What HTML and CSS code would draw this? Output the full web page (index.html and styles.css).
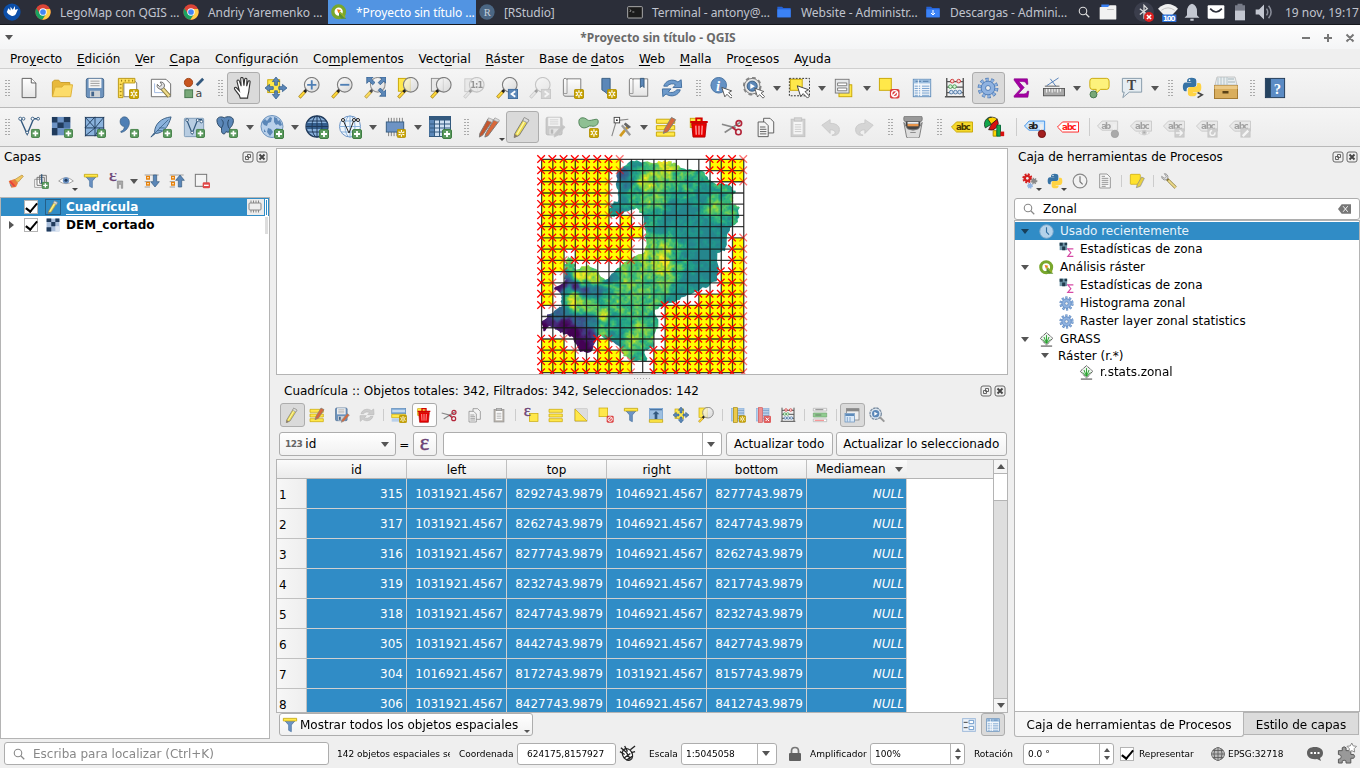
FILE: index.html
```html
<!DOCTYPE html>
<html lang="es">
<head>
<meta charset="utf-8">
<title>*Proyecto sin título - QGIS</title>
<link rel="stylesheet" href="styles.css">
</head>
<body>
<svg class="defs" aria-hidden="true">
<defs>
<linearGradient id="gGlass" x1="0" y1="0" x2="1" y2="1"><stop offset="0" stop-color="#fff"/><stop offset="1" stop-color="#cfcfcf"/></linearGradient>
<linearGradient id="gPaper" x1="0" y1="0" x2="0" y2="1"><stop offset="0" stop-color="#fff"/><stop offset="1" stop-color="#e4e4e4"/></linearGradient>
</defs>
</svg>
<svg class="symbols" aria-hidden="true">
<symbol id="plus" viewBox="0 0 10 10"><rect x=".5" y=".5" width="9" height="9" rx="1.5" fill="#5b9a5e" stroke="#3f7d43"/><path d="M5 2v6M2 5h6" stroke="#fff" stroke-width="1.8"/></symbol>
<symbol id="star" viewBox="0 0 11 11"><rect x=".5" y=".5" width="10" height="10" rx="1.5" fill="#c9a400" stroke="#b08e00"/><path d="M5.500 1.500v8M2 3.500l7 4M9 3.500l-7 4" stroke="#fff" stroke-width="1.300"/><circle cx="5.500" cy="5.500" r="1.200" fill="#c9a400"/></symbol>
<symbol id="lens" viewBox="0 0 24 24"><path d="M1.500 22.500l6.500-7" stroke="#b08e20" stroke-width="3.600"/><path d="M2 22l5-5.500" stroke="#ffd93b" stroke-width="2.200"/><path d="M7 16.500l2.500-3" stroke="#222" stroke-width="3"/><circle cx="15" cy="8.500" r="8" fill="url(#gGlass)" fill-opacity=".75" stroke="#7d7d7d" stroke-width="1.200"/></symbol>
<symbol id="cursor" viewBox="0 0 14 14"><path d="M1 1l3.500 11 2.500-3 4.500 4.500 2-2L9 7l3.500-2z" fill="#fff" stroke="#444"/></symbol>
<symbol id="new" viewBox="0 0 24 24"><path d="M4.500 1.500h10l5 5v16h-15z" fill="url(#gPaper)" stroke="#555"/><path d="M14.500 1.500v5h5" fill="#fff" stroke="#555"/></symbol>
<symbol id="open" viewBox="0 0 24 24"><path d="M1.500 21V5.500l2-2h5l2 2.500h10V9" fill="#e8b93a" stroke="#c79a26"/><path d="M1.500 21.500L4.500 11H12l2-2.500h9.500l-2 13z" fill="#fcdc6a" stroke="#dcae33"/></symbol>
<symbol id="save" viewBox="0 0 24 24"><rect x="2.500" y="1.500" width="19" height="21" rx="2" fill="#6d93bd" stroke="#43658b"/><rect x="5" y="2" width="14" height="10" fill="#f4f4f4"/><path d="M7 4.500h10M7 7h10M7 9.500h10" stroke="#999"/><rect x="6.500" y="15" width="11" height="7" fill="#cfd3d6"/><rect x="8" y="16" width="3" height="5" fill="#43658b"/></symbol>
<symbol id="layout" viewBox="0 0 24 24"><path d="M7.500 2.500h10l4 4v15h-14z" fill="#fff" stroke="#777"/><path d="M1.500 1.500h18v5h-13v16h-5z" fill="#ffdf5a" stroke="#b8950f"/><path d="M5 3v2M9 3v2M13 3v2M17 3v2M3 8h2M3 12h2M3 16h2M3 20h2" stroke="#8a6d00"/><use href="#star" x="13" y="13" width="11" height="11"/></symbol>
<symbol id="layman" viewBox="0 0 24 24"><path d="M1.500 2.500h16l5 5v14h-21z" fill="#fff" stroke="#666"/><path d="M5 7v10h10" fill="none" stroke="#9cb6e0"/><path d="M12 11l9 10" stroke="#8a7a3a" stroke-width="4.500"/><path d="M13 12l8 9" stroke="#efdc8c" stroke-width="2.600"/><path d="M8 8a4 4 0 0 0 5.500 5l2-2A4 4 0 0 0 11 5.500l2 3-2.500 2z" fill="#e4e4e4" stroke="#666"/></symbol>
<symbol id="style" viewBox="0 0 24 24"><circle cx="6" cy="6" r="4.500" fill="#c8551f" stroke="#9c3e10"/><path d="M15 9l7-7" stroke="#33597e" stroke-width="3"/><rect x="2" y="14" width="8.500" height="8.500" fill="#78a878" stroke="#43744a"/><text x="13.500" y="22" font-size="12" font-family="DejaVu Sans" fill="#444">a</text></symbol>
<symbol id="hand" viewBox="0 0 24 24"><path d="M9 23l-1-3-5-6.500c-1-2 .800-3 2.200-1.500L8 15 5.500 5c-.300-2 2-2.400 2.600-.5L10 10 9.500 2c0-2 2.500-2 2.700 0l.8 7.500.8-7c.300-1.800 2.500-1.500 2.500.3L16 10l1.500-5c.6-1.500 2.600-1 2.200.8L18.500 14c0 4-1.500 5-1.500 9z" fill="#fff" stroke="#333" stroke-width="1.200"/></symbol>
<symbol id="pan" viewBox="0 0 24 24"><rect x="3" y="3" width="13" height="14" fill="#ffe84a" stroke="#c7a500"/><g fill="#5b87b8" stroke="#2f5b8a" stroke-width=".8"><path d="M12 0l4 5h-2.500v4h-3V5H8zM12 24l-4-5h2.500v-4h3v4H16zM0 12l5-4v2.500h4v3H5V16zM24 12l-5 4v-2.500h-4v-3h4V8z"/></g></symbol>
<symbol id="zin" viewBox="0 0 24 24"><use href="#lens" width="24" height="24"/><path d="M15 3.500v10M10 8.500h10" stroke="#4f7fb5" stroke-width="2"/></symbol>
<symbol id="zout" viewBox="0 0 24 24"><use href="#lens" width="24" height="24"/><path d="M10 8.500h10" stroke="#4f7fb5" stroke-width="2"/></symbol>
<symbol id="zfull" viewBox="0 0 24 24"><use href="#lens" width="24" height="24" opacity=".8"/><path d="M3 0h7L8 2.200l4 3.800-2.500 2.500-4-4L3 7zM24 0v7l-2.200-2.500-4 4L15.500 6l4-3.800L17 0zM24 21h-7l2.500-2.500-4-4 2.300-2.500 4 4L24 14z" fill="#5b87b8" stroke="#2f5b8a" stroke-width=".8"/></symbol>
<symbol id="zsel" viewBox="0 0 24 24"><rect x="1.500" y="1.500" width="13" height="14" fill="#ffe84a" stroke="#c7a500"/><use href="#lens" width="24" height="24"/></symbol>
<symbol id="zlay" viewBox="0 0 24 24"><rect x="1.500" y="1.500" width="13" height="14" fill="#e8e8e8" stroke="#8a8a8a"/><use href="#lens" width="24" height="24"/></symbol>
<symbol id="znat" viewBox="0 0 24 24"><rect x="2" y="2" width="14" height="14" fill="#ddd" stroke="#888"/><use href="#lens" width="24" height="24"/><text x="8" y="12" font-size="9" font-weight="bold" font-family="DejaVu Sans" textLength="14">1:1</text></symbol>
<symbol id="zlast" viewBox="0 0 24 24"><use href="#lens" width="24" height="24"/><rect x="13.500" y="13.500" width="10" height="10" fill="#5b87b8" stroke="#3c6a9c"/><path d="M21 15.500l-4 3 4 3" fill="none" stroke="#fff" stroke-width="2"/></symbol>
<symbol id="znext" viewBox="0 0 24 24"><use href="#lens" width="24" height="24"/><rect x="13.500" y="13.500" width="10" height="10" fill="#aaa" stroke="#888"/><path d="M17 15.500l4 3-4 3" fill="none" stroke="#fff" stroke-width="2"/></symbol>
<symbol id="nmap" viewBox="0 0 24 24"><path d="M1.500 3c0-2 4-2 4 0v-1h15v19h-16c-2 0-3-.5-3-2z" fill="url(#gPaper)" stroke="#777"/><path d="M5.500 3v15h-4" fill="none" stroke="#999"/><use href="#star" x="13" y="13" width="11" height="11"/></symbol>
<symbol id="nbook" viewBox="0 0 24 24"><path d="M7.500 1.500h9V22L12 17l-4.500-3z" fill="#5b87b8" stroke="#33597e"/><use href="#star" x="13" y="13" width="11" height="11"/></symbol>
<symbol id="book" viewBox="0 0 24 24"><path d="M1.500 3c0-2 4-2 4 0v-1h16v19h-17c-2 0-3-.5-3-2z" fill="url(#gPaper)" stroke="#777"/><path d="M5.500 3v15h-4" fill="none" stroke="#999"/><path d="M13.500 1.500h4v10l-2-2-2 2z" fill="#5b87b8" stroke="#33597e"/></symbol>
<symbol id="refresh" viewBox="0 0 24 24"><path d="M3 10a9.500 8.500 0 0 1 15.500-4.500L22 3l.5 8.500H13l3-3A6 5 0 0 0 7 10z" fill="#6d9acb" stroke="#3c6a9c"/><path d="M21 14a9.500 8.500 0 0 1-15.500 4.500L2 21.500 1.500 13H11l-3 3a6 5 0 0 0 9-2z" fill="#6d9acb" stroke="#3c6a9c"/></symbol>
<symbol id="info" viewBox="0 0 24 24"><circle cx="9.500" cy="9" r="8.500" fill="#6491c4" stroke="#44709f"/><text x="6.500" y="15" font-size="16" font-weight="bold" font-style="italic" font-family="Liberation Serif" fill="#fff">i</text><use href="#cursor" x="12" y="10" width="13" height="14"/></symbol>
<symbol id="action" viewBox="0 0 24 24"><circle cx="10" cy="10" r="9" fill="none" stroke="#888" stroke-width="2.500" stroke-dasharray="4 3"/><circle cx="10" cy="10" r="8.500" fill="#e6e6e6" stroke="#777"/><circle cx="10" cy="10" r="5.500" fill="#5b87b8" stroke="#33597e"/><path d="M8 7l5 3-5 3z" fill="#fff"/><use href="#cursor" x="12" y="11" width="12" height="13"/></symbol>
<symbol id="select" viewBox="0 0 24 24"><rect x="1.500" y="1.500" width="22" height="19" fill="#eee" stroke="#222" stroke-dasharray="2 1.500"/><rect x="2.500" y="2.500" width="13" height="12" fill="#ffe84a" stroke="#c7a500"/><use href="#cursor" x="9" y="8" width="15" height="16"/></symbol>
<symbol id="selval" viewBox="0 0 24 24"><rect x="6.500" y="8.500" width="14" height="13" fill="#ffe84a" stroke="#c7a500"/><rect x="2.500" y="2.500" width="15" height="15" fill="#e6e8ea" stroke="#777"/><path d="M5 6.500h10v3H5zM5 12h10v3H5z" fill="#fff" stroke="#777"/></symbol>
<symbol id="desel" viewBox="0 0 24 24"><rect x="1.500" y="1.500" width="13" height="13" fill="#ffe84a" stroke="#c7a500"/><rect x="13" y="13" width="10.500" height="10.500" rx="2" fill="#db4040"/><circle cx="18.200" cy="18.200" r="3.300" fill="none" stroke="#fff" stroke-width="1.500"/><path d="M16 20.500l4.500-4.500" stroke="#fff" stroke-width="1.500"/></symbol>
<symbol id="table" viewBox="0 0 24 24"><rect x="2.500" y="2.500" width="19" height="19" fill="#f0f5fa" stroke="#5d8ab9"/><rect x="3" y="3" width="18" height="4" fill="#9dbfe0"/><path d="M5 4.700h6M13 4.700h6" stroke="#4c77a6"/><path d="M4 10h6M12 10h8M4 12.500h6M12 12.500h8M4 15h6M12 15h8M4 17.500h6M12 17.500h8M4 20h6M12 20h8" stroke="#6d9acb"/><path d="M8 3v18" stroke="#fff"/></symbol>
<symbol id="abacus" viewBox="0 0 24 24"><path d="M3 1v20M21 1v20M1 21.500h22M3 5h18M3 11h18M3 17h18" stroke="#555" stroke-width="1.500" fill="none"/><g stroke-width="1"><g fill="#f9d5d5" stroke="#cc3434"><circle cx="9" cy="4.500" r="2"/><circle cx="16" cy="4.500" r="2"/></g><g fill="#d8f1d8" stroke="#4a9c51"><circle cx="7" cy="10.500" r="2"/><circle cx="11.500" cy="10.500" r="2"/></g><g fill="#d8e4f5" stroke="#4c77a6"><circle cx="8" cy="16.500" r="2"/><circle cx="12.500" cy="16.500" r="2"/><circle cx="17" cy="16.500" r="2"/></g></g></symbol>
<symbol id="gear" viewBox="0 0 24 24"><circle cx="12" cy="12" r="9.200" fill="none" stroke="#4c7ab5" stroke-width="4.200" stroke-dasharray="3.300 2.480"/><circle cx="12" cy="12" r="9" fill="none" stroke="#8fb2e0" stroke-width="3" stroke-dasharray="2.500 3.160" stroke-dashoffset="-.4"/><circle cx="12" cy="12" r="7.500" fill="#8fb2e0" stroke="#4c7ab5"/><circle cx="12" cy="12" r="2.700" fill="#eee" stroke="#4c7ab5"/></symbol>
<symbol id="sigma" viewBox="0 0 24 24"><path d="M4.500 2H19l.5 6h-1.500c-.5-2-1.500-3-4-3H9.500l6 6.500L9 18.500h6c2.500 0 3.500-1 4-3H20.500L19.500 22H4.500v-1.500l7-7.500-7-9.500z" fill="#a500a5" stroke="#800080" stroke-width=".7"/></symbol>
<symbol id="measure" viewBox="0 0 24 24"><path d="M4 9.500L17 1M8 2l6 8" stroke="#4c7ab5" stroke-width="1" fill="none"/><path d="M2 10h16" stroke="#555" stroke-width="1"/><rect x=".5" y="12.500" width="23" height="8" fill="#a8a8a8" stroke="#555"/><path d="M4 13v4M7 13v3M10 13v4M13 13v3M16 13v4M19 13v3" stroke="#fff"/></symbol>
<symbol id="tip" viewBox="0 0 24 24"><path d="M4.500 1.500h16q2.500 0 2.500 3v6q0 3-2.500 3h-7l-6 6 1.500-6H4.500Q2 13.500 2 10.500v-6q0-3 2.500-3z" fill="#fdf27c" stroke="#c7a500"/><circle cx="6" cy="19" r="3.800" fill="#78a878" stroke="#43744a"/></symbol>
<symbol id="text" viewBox="0 0 24 24"><path d="M1.500 1.500h21v15H9l-7 6 1.500-6h-2z" fill="#e6edf2" stroke="#8095a5"/><text x="6.500" y="14" font-size="15" font-weight="bold" font-family="Liberation Serif" fill="#444">T</text></symbol>
<symbol id="py" viewBox="0 0 24 24"><path d="M6 11V5c0-3 2-4 5.500-4S17 2 17 4.500V9c0 2-1 3-3 3H9c-2 0-3.500 1-3.500 3.500V17H4c-2 0-3-2-3-5s1-5.500 3.500-5.500H11V6H6z" fill="#3773a5"/><path d="M18 7h2c2.500 0 3 2.500 3 5.500s-1 5.500-3.500 5.500H13v.7h4.500c0 3-1.500 4.300-5 4.300S7 22 7 19.500V15c0-2 1-3 3-3h5c2 0 3-1.500 3-3z" fill="#ffd343"/><circle cx="9" cy="3.800" r="1" fill="#fff"/></symbol>
<symbol id="pycon" viewBox="0 0 24 24"><use href="#py" width="22" height="22"/><path d="M17 17l5 2.500-5 3" fill="none" stroke="#444" stroke-width="1.800"/></symbol>
<symbol id="box" viewBox="0 0 24 24"><path d="M1 9L3 1h18l2 8z" fill="#e9eef0" stroke="#aaa" stroke-width=".6"/><path d="M4 2v7M7 1v8M10 1v8M13 1v8" stroke="#b4c3c8"/><path d="M14 3h6M14 6h7" stroke="#a4b3b8"/><rect x=".5" y="9.500" width="23" height="13" fill="#d9ae5e" stroke="#a47b34"/><rect x=".5" y="9.500" width="23" height="3.500" fill="#ecc986"/><rect x="8.500" y="15" width="6" height="2.500" fill="#5b4216"/></symbol>
<symbol id="help" viewBox="0 0 24 24"><rect x="1.500" y="1.500" width="21" height="21" fill="#5b8bc4" stroke="#1f3752"/><rect x="2" y="2" width="5.500" height="20" fill="#24425f"/><text x="10.500" y="18" font-size="16" font-weight="bold" font-family="Liberation Serif" fill="#fff">?</text></symbol>
<symbol id="vadd" viewBox="0 0 24 24"><path d="M2.500 3L10 20 17 3h5" fill="none" stroke="#33597e" stroke-width="1.500"/><g fill="#fff" stroke="#33597e"><circle cx="2.500" cy="3" r="1.700"/><circle cx="6" cy="3" r="1.500"/><circle cx="16" cy="3" r="1.700"/><circle cx="22" cy="3" r="1.500"/><circle cx="10" cy="18" r="1.500"/></g><use href="#plus" x="14" y="14" width="10" height="10"/></symbol>
<symbol id="radd" viewBox="0 0 24 24"><rect x="1" y="1" width="20" height="20" fill="#6d93c4"/><path d="M1 1h6v6H1zM14 1h7v6h-7zM7 7h7v6H7zM1 13h6v8H1z" fill="#203b5c"/><path d="M14 7h7v6h-7z" fill="#4a72a6"/><use href="#plus" x="14" y="14" width="10" height="10"/></symbol>
<symbol id="mesh" viewBox="0 0 24 24"><rect x="1.500" y="1.500" width="20" height="20" fill="#8ab2dc" stroke="#203b5c"/><path d="M12 1v21M1 13h21M1 1l11 12L1 22M12 13L22 1M12 1L1 13M12 22l5-9" stroke="#203b5c" fill="none"/><use href="#plus" x="14" y="14" width="10" height="10"/></symbol>
<symbol id="comma" viewBox="0 0 24 24"><path d="M7 1c6-1 9 7 4 13-2 2.500-4 3.500-6.500 4l-.5-1c3-1.500 4-3 4-5.500C2 11 2 2 7 1z" fill="#4f7fb5" stroke="#33597e" stroke-width=".7"/><use href="#plus" x="14" y="14" width="10" height="10"/></symbol>
<symbol id="feather" viewBox="0 0 24 24"><path d="M23 1C12 2 5 9 5 18l-4 5 5-4C14 19 20 12 23 1z" fill="#8ab2dc" stroke="#33597e"/><path d="M3 21L20 4M10 13l6 0M8 16l5 0" stroke="#33597e" stroke-width=".8"/><use href="#plus" x="14" y="14" width="10" height="10"/></symbol>
<symbol id="vbox" viewBox="0 0 24 24"><rect x="1.500" y="2.500" width="21" height="20" rx="1" fill="#b8cde2" stroke="#7b98b5"/><path d="M4 4l6 15 6-15h5" fill="none" stroke="#33597e" stroke-width="1.300"/><g fill="#fff" stroke="#33597e"><circle cx="4.500" cy="4.500" r="1.500"/><circle cx="16" cy="4.500" r="1.500"/><circle cx="20" cy="6" r="1.500"/><circle cx="10" cy="18" r="1.500"/></g><use href="#plus" x="14" y="14" width="10" height="10"/></symbol>
<symbol id="eleph" viewBox="0 0 24 24"><path d="M1 5c0-4 5-5 8-3 3-2 10-2 10 3 0 4-3 8-4 8v3c0 2-3 2-4 1-1 4-5 3-5-1v-3C3 12 1 8 1 5z" fill="#5b87b8" stroke="#24425f"/><path d="M6 4c3 2 2 6 0 9M14 4c-2 3-1 7 0 9" fill="none" stroke="#24425f"/><use href="#plus" x="14" y="14" width="10" height="10"/></symbol>
<symbol id="wms" viewBox="0 0 24 24"><circle cx="12" cy="11.500" r="11" fill="#b9d0ea" stroke="#6d93bd"/><path d="M2 7l3-3 2 2 3-4 2 1-1 4-3 1-1 3-3-1zM14 2l3 1 1 3 2-1 2 5-2 1-2-2-2 1-2-3zM8 13l3 1 2 3-3 4-3-4zM16 13l5 1-2 3-2-1zM4 14l2 3-2 0z" fill="#5b87b8"/><use href="#plus" x="14" y="14" width="10" height="10"/></symbol>
<symbol id="wcs" viewBox="0 0 24 24"><ellipse cx="12" cy="11.500" rx="11" ry="10.500" fill="#8ab2dc" stroke="#203b5c" stroke-width="1.300"/><path d="M1.500 8h21v6h-21z" fill="#345f8e"/><ellipse cx="12" cy="11.500" rx="5" ry="10.500" fill="none" stroke="#203b5c"/><path d="M12 1v21M1 11.500h22M3 6h18M3 17h18" stroke="#203b5c"/><use href="#plus" x="14" y="14" width="10" height="10"/></symbol>
<symbol id="wfs" viewBox="0 0 24 24"><circle cx="12" cy="11.500" r="10.500" fill="#f1f6fb" stroke="#6d93c4"/><ellipse cx="12" cy="11.500" rx="5" ry="10.500" fill="none" stroke="#8ab2dc"/><path d="M12 1v21M1 11.500h22M3 6h18M3 17h18" stroke="#8ab2dc"/><path d="M5 5l6 13 5-13h4" fill="none" stroke="#222"/><g fill="#fff" stroke="#222"><circle cx="5" cy="5" r="1.500"/><circle cx="16" cy="5" r="1.500"/><circle cx="20" cy="5" r="1.500"/></g><use href="#plus" x="14" y="14" width="10" height="10"/></symbol>
<symbol id="chip" viewBox="0 0 24 24"><path d="M5 2v20M8 2v20M11 2v20M14 2v20M17 2v20M20 2v20" stroke="#777"/><rect x="2.500" y="6.500" width="19" height="11" fill="#6d93c4" stroke="#33597e"/><use href="#star" x="14" y="14" width="10" height="10"/></symbol>
<symbol id="vtab" viewBox="0 0 24 24"><rect x="1.500" y="1.500" width="21" height="20" fill="#cfe0f2" stroke="#33597e"/><rect x="1.500" y="1.500" width="21" height="4" fill="#33597e"/><rect x="1.500" y="5" width="5" height="16" fill="#5b87b8"/><path d="M6.500 2v20M11.500 2v20M16.500 2v20M2 9h20M2 13h20M2 17h20" stroke="#33597e"/><use href="#plus" x="14" y="14" width="10" height="10"/></symbol>
<symbol id="pencil" viewBox="0 0 24 24"><path d="M7 22l-3.500 1.500L4 19.500 14.500 2l5 2.500L9 21z" fill="#e9d84e" stroke="#777"/><path d="M6.500 20L16.500 3" stroke="#fff8a8" stroke-width="1.500"/><path d="M14.500 1.500l5 3-1.500 3-5-2.500z" fill="#ddd" stroke="#999"/><path d="M3.500 23.500L4 19.500l3.500 2.500z" fill="#8a7a6a"/></symbol>
<symbol id="pen2" viewBox="0 0 24 24"><path d="M5 21l-3.500 2L2 19 11 3l5 2z" fill="#c4562e" stroke="#777"/><path d="M11 21.500L7.500 23l1-4L18 3l5 2.500z" fill="#d8683a" stroke="#777"/><path d="M11.500 2l5 2-1 3-5-2zM18.500 2l5 2.500-1.500 2-5-2z" fill="#ddd" stroke="#999" stroke-width=".7"/></symbol>
<symbol id="edsave" viewBox="0 0 24 24"><use href="#save" width="22" height="22"/><path d="M11 23l1-4 8-9 3 2-8 9z" fill="#d8683a" stroke="#888"/></symbol>
<symbol id="poly" viewBox="0 0 24 24"><path d="M2 6c0-5 6-5 9-2s11-3 12 1-3 7-7 6-4 2-8 2-6-3-6-7z" fill="#8fc093" stroke="#4d7f54"/><use href="#star" x="13" y="13" width="11" height="11"/></symbol>
<symbol id="vertex" viewBox="0 0 24 24"><path d="M2 22L7 5l13-1.500" fill="none" stroke="#888" stroke-width="1.200"/><rect x="4.500" y="1.500" width="6" height="6" fill="#fff" stroke="#444"/><circle cx="7.500" cy="4.500" r="1" fill="#222"/><path d="M11 22L20 11" stroke="#d09a20" stroke-width="3"/><path d="M13 10l9 11" stroke="#999" stroke-width="2.500"/><path d="M17 7l6 5-3 2-5-5z" fill="#666"/></symbol>
<symbol id="bars" viewBox="0 0 24 24"><path d="M1.500 3.500h20v4.500h-20zM1.500 10.500h20V15h-20zM1.500 17.500h20V22h-20z" fill="#ffe84a" stroke="#c7a500"/></symbol>
<symbol id="edmulti" viewBox="0 0 24 24"><use href="#bars" width="24" height="24"/><path d="M9 19l1.500-5L18 1.500l4.500 2.500L14 17z" fill="#d8683a" stroke="#7d7d7d"/></symbol>
<symbol id="trash" viewBox="0 0 24 24"><rect x="2.500" y="2.500" width="11" height="10" fill="#ffe84a" stroke="#c7a500"/><path d="M4 8h16l-1.500 15h-13z" fill="#e80000" stroke="#b00000"/><path d="M2.500 6.500h19M9 5.500v-3h6v3" stroke="#d40000" stroke-width="2" fill="none"/><path d="M8.500 10.500l.5 10M12 10.500v10M15.500 10.500l-.5 10" stroke="#ff9a9a" stroke-width="1.500"/></symbol>
<symbol id="cut" viewBox="0 0 24 24"><path d="M1 9l15 4M4 18L21 7" stroke="#888" stroke-width="1.800"/><circle cx="19.500" cy="8" r="3" fill="none" stroke="#b3263a" stroke-width="1.800"/><circle cx="19" cy="17.500" r="3" fill="none" stroke="#b3263a" stroke-width="1.800"/><path d="M12 12l5 4" stroke="#b3263a" stroke-width="2"/></symbol>
<symbol id="copy" viewBox="0 0 24 24"><path d="M10.500 2.500h7l4 4v12h-11z" fill="#f5f5f5" stroke="#555"/><path d="M4.500 6.500h7l4 4v12h-11z" fill="#f5f5f5" stroke="#555"/><path d="M6.500 12h6M6.500 14.500h7M6.500 17h7M6.500 19.500h7" stroke="#555"/></symbol>
<symbol id="paste" viewBox="0 0 24 24"><rect x="4.500" y="3.500" width="15" height="19" fill="#b59a78" stroke="#777"/><rect x="7" y="6" width="10" height="14" fill="#fff"/><path d="M8.500 9.500h7M8.500 12h7M8.500 14.500h7M8.500 17h7" stroke="#888"/><rect x="8" y="2" width="8" height="3.500" fill="#aaa" stroke="#777"/></symbol>
<symbol id="undo" viewBox="0 0 24 24"><path d="M2 10l9-6v4c7 0 11 3 10 8.500-1 4-4 5-8 4.500 5-1 5-6-2-6v4z" fill="#aaa" stroke="#888"/></symbol>
<symbol id="redo" viewBox="0 0 24 24"><path d="M22 10l-9-6v4C6 8 2 11 3 16.500c1 4 4 5 8 4.500-5-1-5-6 2-6v4z" fill="#aaa" stroke="#888"/></symbol>
<symbol id="osm" viewBox="0 0 24 24"><rect x="2" y="0" width="20" height="6" rx="2" fill="#999" stroke="#777"/><rect x="4" y="6" width="16" height="9" fill="#444"/><path d="M6 7.500h12" stroke="#eee" stroke-width="2"/><path d="M6 10h12" stroke="#e8954a" stroke-width="2.500"/><path d="M2 7l3 16q0 1 2 1h10q2 0 2-1l3-16-4 7q-6 3-12 0z" fill="#ddd" stroke="#777"/><path d="M9 18h6" stroke="#888"/></symbol>
<symbol id="tag" viewBox="0 0 24 24"><path d="M.5 12L6 6.500h17.500v11H6z"/><text x="5.500" y="15.500" font-size="9.500" font-weight="bold" font-family="DejaVu Sans" fill="currentColor" stroke="none" textLength="16">abc</text></symbol>
<symbol id="tagab" viewBox="0 0 24 24"><path d="M.5 11l5-5.500h17v10h-17z" fill="#cfe6fb" stroke="#3b8fe8"/><text x="4.500" y="14" font-size="9.500" font-weight="bold" font-family="DejaVu Sans" fill="#222" textLength="11">ab</text><path d="M19 9v8" stroke="#eee" stroke-width="3"/><circle cx="19.500" cy="19.500" r="4" fill="#a31f1f" stroke="#701010"/></symbol>
<symbol id="pie" viewBox="0 0 24 24"><path d="M8 9V1a8 8 0 0 0-6.500 12z" fill="#13a64b" stroke="#111" stroke-width=".7"/><path d="M8 9l6.500-5.500A8 8 0 0 0 4 3z" fill="#ffd400" stroke="#111" stroke-width=".7"/><path d="M8 9l6.500-5.500A8 8 0 0 1 5 15z" fill="#d81010" stroke="#111" stroke-width=".7"/><path d="M10 16h4v6h-4z" fill="#ffd400" stroke="#a80"/><path d="M14 10h4v12h-4z" fill="#13a64b" stroke="#063"/><path d="M18 17h4v5h-4z" fill="#d81010"/></symbol>
<symbol id="funnel" viewBox="0 0 24 24"><path d="M2 3h20l-8 9v10l-4-2v-8z" fill="#6d93c4" stroke="#3c6a9c"/><path d="M2 2h20v4H2z" fill="#ffe84a" stroke="#c7a500"/></symbol>
<symbol id="brush" viewBox="0 0 24 24"><path d="M1 12l9-3 5 6-3 6-7 1z" fill="#ec7a3c"/><path d="M3 12l7 8" stroke="#e84040" stroke-width="2.500"/><path d="M2 15l5 6-3-1z" fill="#5b87b8"/><path d="M10 10l11-7 2 2-8 9z" fill="#f0c860" stroke="#b58a30"/></symbol>
<symbol id="group" viewBox="0 0 24 24"><path d="M2.500 9.500h11v12h-11z" fill="#fff" stroke="#777"/><path d="M6 6.500h11v12H6zM10 3.500h10v12H10z" fill="none" stroke="#777" stroke-width="1.500"/><path d="M13 2v14" stroke="#33597e" stroke-width="2"/><use href="#plus" x="13" y="13" width="11" height="11"/></symbol>
<symbol id="eye" viewBox="0 0 24 24"><path d="M1 12Q12 2 23 12 12 20 1 12z" fill="#fff" stroke="#999" stroke-width="1.300"/><circle cx="12" cy="11" r="4.800" fill="#6d93c4"/><circle cx="12" cy="11" r="2.300" fill="#203b5c"/></symbol>
<symbol id="eps" viewBox="0 0 24 24"><text x="4" y="21" font-size="34" font-family="Liberation Serif" fill="#6b4275" stroke="#6b4275" stroke-width=".7">ε</text></symbol>
<symbol id="epsf" viewBox="0 0 24 24"><use href="#eps" x="-2" y="-5" width="20" height="20"/><path d="M14 12h8v11h-2v-6h-4v6h-2z" fill="#aaa" stroke="#888"/></symbol>
<symbol id="expand" viewBox="0 0 24 24"><path d="M1 3h21M1 13h8M1 21h8" stroke="#777"/><path d="M4 5h4v4H4zM4 14h4v4H4z" fill="#fff" stroke="#e8820a" stroke-width="2"/><path d="M14 3h5v10h4l-6.500 8L10 13h4z" fill="#5b87b8" stroke="#33597e"/></symbol>
<symbol id="collapse" viewBox="0 0 24 24"><path d="M1 3h21M1 13h8M1 21h8" stroke="#777"/><path d="M4 5h4v4H4zM4 14h4v4H4z" fill="#fff" stroke="#e8820a" stroke-width="2"/><path d="M14 21h5V11h4l-6.500-8L10 11h4z" fill="#5b87b8" stroke="#33597e"/></symbol>
<symbol id="remove" viewBox="0 0 24 24"><rect x="2" y="2" width="17" height="18" fill="#f4f4f4" stroke="#777" stroke-width="1.500"/><rect x="13" y="14" width="11" height="9" rx="2" fill="#e04848"/><path d="M15 18.500h7" stroke="#fff" stroke-width="2"/></symbol>
<symbol id="raster" viewBox="0 0 24 24"><rect x="1" y="1" width="22" height="22" fill="#a9bedb"/><path d="M1 1h8v6H1zM16 1h7v6h-7zM9 7h7v7H9zM1 16h8v7H1z" fill="#203b5c"/><path d="M16 14h7v9h-7z" fill="#dde6f2"/></symbol>
<symbol id="eform" viewBox="0 0 24 24"><rect x="9.500" y="9.500" width="13" height="12" fill="#ffe84a" stroke="#c7a500"/><use href="#eps" x="-2" y="-4" width="18" height="20"/></symbol>
<symbol id="invert" viewBox="0 0 24 24"><rect x="3" y="3" width="18" height="18" fill="#f1f1f1" stroke="#999"/><path d="M3 21h18L3 3z" fill="#f4f4f4"/><path d="M3 3h18v18z" fill="#ddd"/><path d="M3 3v18h18z" fill="#ffe84a" stroke="#c7a500"/></symbol>
<symbol id="totop" viewBox="0 0 24 24"><rect x="2" y="2" width="20" height="20" fill="#9dbfe0" stroke="#6d9acb"/><path d="M2 19h20v4H2z" fill="#ffe84a" stroke="#c7a500"/><path d="M12 6l5 5h-3v7h-4v-7H7z" fill="#33597e"/><path d="M3 4h18" stroke="#4c77a6" stroke-width="2"/></symbol>
<symbol id="tabnew" viewBox="0 0 24 24"><rect x="1" y="2" width="21" height="8" fill="#8ab2dc" stroke="#5d8ab9"/><path d="M1 11h21v5H1z" fill="#ffe84a" stroke="#c7a500"/><path d="M1 17h21v5H1z" fill="#b9d0ea"/><path d="M2 6h19" stroke="#fff" stroke-width="1.500"/><use href="#star" x="12" y="12" width="12" height="12"/></symbol>
<symbol id="colnew" viewBox="0 0 24 24"><rect x="2" y="2" width="19" height="19" fill="#b9d0ea" stroke="#8ab2dc"/><path d="M12 5h9M12 9h9M12 13h9M12 17h9" stroke="#5d8ab9"/><rect x="5" y="1" width="6" height="22" fill="#ecc94a" stroke="#a68800"/><use href="#star" x="13" y="12" width="11" height="12"/></symbol>
<symbol id="coldel" viewBox="0 0 24 24"><rect x="2" y="2" width="19" height="19" fill="#b9d0ea" stroke="#8ab2dc"/><path d="M12 5h9M12 9h9M12 13h9M12 17h9" stroke="#5d8ab9"/><rect x="5" y="1" width="6" height="22" fill="#ef9090" stroke="#d45454"/><rect x="13" y="13" width="11" height="11" rx="2" fill="#e06060"/><path d="M16 16l5 5M21 16l-5 5" stroke="#fff" stroke-width="1.500"/></symbol>
<symbol id="cond" viewBox="0 0 24 24"><path d="M2 2h20v4H2z" fill="#f5f5f5" stroke="#aaa"/><path d="M2 9h20v6H2z" fill="#90cc90" stroke="#6fa56f"/><path d="M2 18h20v4H2z" fill="#fff" stroke="#aaa"/><path d="M5 4h12M5 12h9" stroke="#555"/><path d="M4 20h14" stroke="#e44"/></symbol>
<symbol id="dock" viewBox="0 0 24 24"><rect x="3.500" y="2.500" width="19" height="17" fill="#eee" stroke="#777"/><path d="M3.500 2.500h19v4h-19z" fill="#888"/><rect x="1.500" y="9.500" width="14" height="13" fill="#d9e8f7" stroke="#5d8ab9"/><path d="M2 12h13" stroke="#5d8ab9" stroke-width="3"/><path d="M5 15v7M9 15v7" stroke="#5d8ab9"/></symbol>
<symbol id="magact" viewBox="0 0 24 24"><circle cx="10" cy="10" r="8.500" fill="#dfe9f3" stroke="#7d8fa3" stroke-width="2" stroke-dasharray="4 1"/><circle cx="10" cy="10" r="5.500" fill="#5b87b8"/><path d="M8 7l5 3-5 3z" fill="#fff"/><path d="M16 15l7 7" stroke="#999" stroke-width="3"/></symbol>
<symbol id="clock" viewBox="0 0 24 24"><circle cx="12" cy="12" r="10.300" fill="#f2f2f2" stroke="#888" stroke-width="1.800"/><path d="M12 5v8l4 4" fill="none" stroke="#777" stroke-width="1.800"/></symbol>
<symbol id="clockb" viewBox="0 0 24 24"><circle cx="12" cy="12" r="10.800" fill="#b4d2ea" stroke="#7fa9cc" stroke-width="1.500"/><path d="M12 5v8l4 4" fill="none" stroke="#2f6da0" stroke-width="1.800"/></symbol>
<symbol id="doc" viewBox="0 0 24 24"><path d="M4 1.500h11l5 5v16H4z" fill="#f7f7f7" stroke="#999" stroke-width="1.500"/><path d="M7 8h10M7 11h10M7 14h10M7 17h10M7 20h6M7 5h5" stroke="#888" stroke-width="1.300"/></symbol>
<symbol id="edit" viewBox="0 0 24 24"><rect x="2" y="2" width="15" height="15" rx="1" fill="#ffe22c" stroke="#c7a500"/><path d="M11 22l1.500-5L19 6l4 2-6 12z" fill="#e8d040" stroke="#888"/></symbol>
<symbol id="wrench" viewBox="0 0 24 24"><path d="M9 9l13 13" stroke="#8a7a3a" stroke-width="4.500"/><path d="M11 11l11 11" stroke="#efdc8c" stroke-width="2.800"/><path d="M1 5a5 5 0 0 0 7 5l2-2a5 5 0 0 0-5-7l3 4-3 3z" fill="#ddd" stroke="#777"/></symbol>
<symbol id="gears" viewBox="0 0 24 24"><circle cx="8" cy="8" r="5.500" fill="#d42020" stroke="#d42020" stroke-width="4" stroke-dasharray="2.500 1.820"/><circle cx="8" cy="8" r="2" fill="#eee"/><circle cx="18" cy="12" r="3.500" fill="#888" stroke="#888" stroke-width="3" stroke-dasharray="1.500 1.200"/><circle cx="12" cy="19" r="3" fill="#8fb2e0" stroke="#8fb2e0" stroke-width="3" stroke-dasharray="1.500 1"/></symbol>
<symbol id="zonal" viewBox="0 0 24 24"><path d="M1 1h12v12H1z" fill="#6e96a8"/><path d="M1 1h5v5H1zM9 1h4v4H9zM5 7h5v6H5z" fill="#203b4c"/><path d="M23 11h-9l5 6-5 6h9" fill="none" stroke="#d64aa5" stroke-width="1.800"/></symbol>
<symbol id="qgis" viewBox="0 0 24 24"><circle cx="11.500" cy="11.500" r="8.700" fill="#fff" stroke="#79a72d" stroke-width="5"/><path d="M12 12l11 10h-7l-4-4z" fill="#5b9030"/><path d="M9 8l6 1-4 5z" fill="#ee7913"/><path d="M13 12l8 8" stroke="#93b023" stroke-width="2.500"/></symbol>
<symbol id="grass" viewBox="0 0 24 24"><path d="M12 1l10 9-10 11L2 10z" fill="#eef3ee" stroke="#333" stroke-width="1.500" stroke-dasharray="2 1"/><path d="M12 18V5M12 18L8 8M12 18l4-10M12 18l-6-6M12 18l6-6" stroke="#24a02c" stroke-width="1.500"/><path d="M3 22.500h18" stroke="#333" stroke-width="1.500"/></symbol>
<symbol id="chrome" viewBox="0 0 24 24"><circle cx="12" cy="12" r="11.500" fill="#db4437"/><path d="M2 6.500A11.500 11.500 0 0 0 11 23.500L17 15 7 14z" fill="#1aa260"/><path d="M11 23.500A11.500 11.500 0 0 0 22.500 7.500H12l5 7z" fill="#ffce44"/><circle cx="12" cy="12" r="5.600" fill="#fff"/><circle cx="12" cy="12" r="4.300" fill="#4285f4"/></symbol>
<symbol id="folder" viewBox="0 0 24 24"><path d="M2 4h7l2 2h11v14H2z" fill="#2563d8"/><path d="M2 8h20v12H2z" fill="#3b82f6"/></symbol>
<symbol id="mag" viewBox="0 0 24 24"><circle cx="10" cy="10" r="7.500" fill="none" stroke="currentColor" stroke-width="2.200"/><path d="M15.500 15.500l7 7" stroke="currentColor" stroke-width="2.600"/></symbol>
<symbol id="float" viewBox="0 0 12 12"><rect x="1" y="1" width="10" height="10" rx="2" fill="none" stroke="#666"/><path d="M5.500 3.500h3v3h-3zM3.500 5.500h3v3h-3z" fill="#eee" stroke="#555" stroke-width=".9"/></symbol>
<symbol id="close" viewBox="0 0 12 12"><rect x="1" y="1" width="10" height="10" rx="2" fill="none" stroke="#666"/><path d="M3.500 3.500l5 5M8.500 3.500l-5 5" stroke="#444" stroke-width="1.900"/></symbol>
<symbol id="formv" viewBox="0 0 24 24"><rect x="2.500" y="2.500" width="19" height="19" fill="#eff4fa" stroke="#9db9da" stroke-width="1.500"/><path d="M4 8h6M4 16h6" stroke="#444" stroke-width="1.500"/><path d="M12 5h7v5h-7zM12 14h7v5h-7z" fill="#fff" stroke="#6d9acb" stroke-width="1.500"/></symbol>
</svg>

<header class="panel">
  <span class="menu-btn"><svg viewBox="0 0 24 24" width="18" height="18"><circle cx="12" cy="12" r="11.500" fill="#0c4ea8"/><path d="M6 10l1-3 3 3 0-5 3 4 3-5 0 5 4-1-3 7q-2 3-6 2t-6-5z" fill="#fff"/></svg></span>
  <span class="task"><svg class="t"><use href="#chrome"/></svg><b>LegoMap con QGIS ...</b></span>
  <span class="task"><svg class="t"><use href="#chrome"/></svg><b>Andriy Yaremenko ...</b></span>
  <span class="task on"><svg class="t"><use href="#qgis"/></svg><b>*Proyecto sin título ...</b></span>
  <span class="task"><svg class="t" viewBox="0 0 24 24"><circle cx="12" cy="12" r="11.500" fill="#4b6784"/><text x="7" y="17.500" font-size="16" font-family="Liberation Serif" fill="#c3cfdb">R</text></svg><b>[RStudio]</b></span>
  <span class="task w"><svg class="t" viewBox="0 0 24 24"><rect x="1" y="4" width="22" height="17" rx="1" fill="#1b1b1b" stroke="#aaa" stroke-width="1.500"/><path d="M4 8l2 2-2 2M8 12h3" stroke="#ddd" fill="none"/></svg><b>Terminal - antony@...</b></span>
  <span class="task w"><svg class="t"><use href="#folder"/></svg><b>Website - Administr...</b></span>
  <span class="task w"><svg class="t" viewBox="0 0 24 24"><use href="#folder"/><path d="M12 9v7M9 13.500l3 3 3-3" stroke="#fff" stroke-width="1.500" fill="none"/></svg><b>Descargas - Admini...</b></span>
  <span class="tray">
    <svg viewBox="0 0 24 24" class="sm"><use href="#mag"/></svg>
    <svg viewBox="0 0 24 24"><path d="M4 3h9l1 3H4z" fill="#3b82f6"/><path d="M2 7q0-1 1-1h9l2-2h7q1 0 1 1v15q0 1-1 1H3q-1 0-1-1z" fill="#f2f2f2"/><path d="M11 9h8" stroke="#bbb"/></svg>
    <i class="gap"></i>
    <svg viewBox="0 0 24 24"><circle cx="12" cy="12" r="12" fill="#3b3e4c"/><path d="M7 8l9 7-4 4V4l4 4-9 7" fill="none" stroke="#ddd" stroke-width="1.500"/><circle cx="18" cy="18" r="6" fill="#dc2020"/><path d="M15.500 15.500l5 5M20.500 15.500l-5 5" stroke="#fff" stroke-width="1.800"/></svg>
    <svg viewBox="0 0 24 24"><path d="M0 8Q12-3 24 8L12 21z" fill="#f0f0f0"/><path d="M4 10q8-6 16 0" fill="none" stroke="#bbb"/><rect x="5" y="15" width="17" height="9" fill="#2a6fd6"/><text x="6" y="22.500" font-size="8.500" font-weight="bold" font-family="DejaVu Sans" fill="#fff" textLength="15">100</text></svg>
    <svg viewBox="0 0 24 24"><path d="M12 2q6 2 6 9v5l3 3H3l3-3v-5q0-7 6-9zM10 20h4v2.500h-4z" fill="#c3c7d1"/></svg>
    <svg viewBox="0 0 24 24"><rect x="2" y="4" width="20" height="16" rx="1" fill="#fff"/><path d="M5 8q7 8 14 0" stroke="#2b2e39" stroke-width="2" fill="none"/></svg>
    <svg viewBox="0 0 24 24"><path d="M9 2h6v2h3v6H6V4h3z" fill="#777b88"/><path d="M6 10h12v12H6z" fill="#c3c7d1"/></svg>
    <svg viewBox="0 0 24 24"><path d="M2 9h4l6-6v18l-6-6H2z" fill="#c3c7d1"/><path d="M15 8q3 4 0 8M17.500 4.500q6 7.500 0 15" stroke="#8a8e9a" stroke-width="1.800" fill="none"/></svg>
  </span>
  <span class="clk">19 nov, 19:17</span>
</header>

<div class="titlebar"><i class="dn"></i><strong>*Proyecto sin título - QGIS</strong>
  <svg width="60" height="12" viewBox="0 0 60 12"><path d="M2 6h8M24 6h8M28 2v8M46.500 2.500l7 7M53.500 2.500l-7 7" stroke="#777" stroke-width="2"/></svg></div>

<nav class="menubar"><span>Pro<u>y</u>ecto</span><span><u>E</u>dición</span><span><u>V</u>er</span><span><u>C</u>apa</span><span>Conf<u>i</u>guración</span><span>Co<u>m</u>plementos</span><span>Vect<u>o</u>rial</span><span><u>R</u>áster</span><span>Base de <u>d</u>atos</span><span><u>W</u>eb</span><span><u>M</u>alla</span><span>Pro<u>c</u>esos</span><span>A<u>y</u>uda</span></nav>

<div class="toolbar">
  <i class="hd first"></i><a><svg><use href="#new"/></svg></a><a><svg><use href="#open"/></svg></a><a><svg><use href="#save"/></svg></a><a><svg><use href="#layout"/></svg></a><a><svg><use href="#layman"/></svg></a><a><svg><use href="#style"/></svg></a>
  <i class="hd"></i><a class="on"><svg><use href="#hand"/></svg></a><a><svg><use href="#pan"/></svg></a><a><svg><use href="#zin"/></svg></a><a><svg><use href="#zout"/></svg></a><a><svg><use href="#zfull"/></svg></a><a><svg><use href="#zsel"/></svg></a><a><svg><use href="#zlay"/></svg></a><a class="off"><svg><use href="#znat"/></svg></a><a><svg><use href="#zlast"/></svg></a><a class="off"><svg><use href="#znext"/></svg></a><a><svg><use href="#nmap"/></svg></a><a><svg><use href="#nbook"/></svg></a><a><svg><use href="#book"/></svg></a><a><svg><use href="#refresh"/></svg></a>
  <i class="hd"></i><a><svg><use href="#info"/></svg></a><a><svg><use href="#action"/></svg></a><i class="ar"></i><a><svg><use href="#select"/></svg></a><i class="ar"></i><a><svg><use href="#selval"/></svg></a><i class="ar"></i><a><svg><use href="#desel"/></svg></a><a><svg><use href="#table"/></svg></a><a><svg><use href="#abacus"/></svg></a><a class="on"><svg><use href="#gear"/></svg></a><a><svg><use href="#sigma"/></svg></a><a><svg><use href="#measure"/></svg></a><i class="ar"></i><a><svg><use href="#tip"/></svg></a><a><svg><use href="#text"/></svg></a><i class="ar"></i>
  <i class="hd"></i><a><svg><use href="#pycon"/></svg></a><a><svg class="big"><use href="#box"/></svg></a>
  <i class="hd"></i><a><svg><use href="#help"/></svg></a>
</div>
<div class="toolbar">
  <i class="hd first"></i><a><svg><use href="#vadd"/></svg></a><a><svg><use href="#radd"/></svg></a><a><svg><use href="#mesh"/></svg></a><a><svg><use href="#comma"/></svg></a><a><svg><use href="#feather"/></svg></a><a><svg><use href="#vbox"/></svg></a><a><svg><use href="#eleph"/></svg></a><i class="ar"></i><a><svg class="big"><use href="#wms"/></svg></a><i class="ar"></i><a><svg class="big"><use href="#wcs"/></svg></a><a><svg class="big"><use href="#wfs"/></svg></a><i class="ar"></i><a><svg><use href="#chip"/></svg></a><i class="ar"></i><a><svg class="big"><use href="#vtab"/></svg></a>
  <i class="hd"></i><a class="mini"><svg><use href="#pen2"/></svg></a><a class="on"><svg><use href="#pencil"/></svg></a><a class="off"><svg><use href="#edsave"/></svg></a><a><svg><use href="#poly"/></svg></a><a><svg><use href="#vertex"/></svg></a><i class="ar"></i><a><svg><use href="#edmulti"/></svg></a><a><svg><use href="#trash"/></svg></a><a><svg><use href="#cut"/></svg></a><a><svg><use href="#copy"/></svg></a><a class="off"><svg><use href="#paste"/></svg></a><a class="off"><svg><use href="#undo"/></svg></a><a class="off"><svg><use href="#redo"/></svg></a>
  <i class="hd"></i><a><svg><use href="#osm"/></svg></a>
  <i class="hd"></i><a><svg class="tagy"><use href="#tag"/></svg></a><a><svg><use href="#pie"/></svg></a><i class="sp"></i><a><svg><use href="#tagab"/></svg></a><a><svg class="tagr"><use href="#tag"/></svg></a><i class="sp"></i><a class="off gray"><svg><use href="#tagab"/></svg></a>
  <a class="off gray"><svg viewBox="0 0 24 24" class="tagg"><use href="#tag" y="-1" width="24" height="24"/><use href="#eye" x="8" y="12" width="15" height="13"/></svg></a>
  <a class="off gray"><svg viewBox="0 0 24 24" class="tagg"><use href="#tag" y="-1" width="24" height="24"/><rect x="13" y="14" width="10" height="9" fill="#999"/><path d="M14 18.500h7M18 15.500l3 3-3 3" stroke="#fff" stroke-width="1.500" fill="none"/></svg></a>
  <a class="off gray"><svg viewBox="0 0 24 24" class="tagg"><use href="#tag" y="-1" width="24" height="24"/><rect x="13" y="14" width="10" height="9" fill="#999"/><circle cx="18" cy="18.500" r="2.700" fill="none" stroke="#fff" stroke-width="1.500" stroke-dasharray="12 4"/></svg></a>
  <a class="off gray"><svg viewBox="0 0 24 24" class="tagg"><use href="#tag" y="-1" width="24" height="24"/><rect x="13" y="14" width="10" height="9" fill="#999"/><path d="M15 22l6-6" stroke="#fff" stroke-width="2.500"/></svg></a>
</div>

<main>
  <section class="left">
    <div class="dt"><span>Capas</span><svg><use href="#float"/></svg><svg><use href="#close"/></svg></div>
    <div class="tb"><a><svg><use href="#brush"/></svg></a><a><svg><use href="#group"/></svg></a><a class="mini"><svg><use href="#eye"/></svg></a><a><svg><use href="#funnel"/></svg></a><a><svg><use href="#epsf"/></svg></a><i class="ar"></i><a><svg><use href="#expand"/></svg></a><a><svg><use href="#collapse"/></svg></a><a><svg><use href="#remove"/></svg></a></div>
    <div class="tree layers">
      <div class="ly sel"><i class="tw"></i><i class="ck"></i><span class="li"><svg><use href="#pencil"/></svg></span><strong>Cuadrícula</strong><span class="mem"><svg viewBox="0 0 16 14"><path d="M4 1v12M6.500 1v12M9 1v12M11.500 1v12" stroke="#888"/><rect x="2" y="3.500" width="12" height="7" rx="1" fill="#eee" stroke="#888"/></svg></span><i class="ind"></i></div>
      <div class="ly"><i class="tw rt"></i><i class="ck"></i><span class="li"><svg><use href="#raster"/></svg></span><strong>DEM_cortado</strong><i class="ind g"></i></div>
    </div>
  </section>

  <section class="mid">
    <div class="map"><canvas id="map" width="730" height="225"></canvas></div>
    <div class="grip"></div>
    <div class="dt mt"><span>Cuadrícula :: Objetos totales: 342, Filtrados: 342, Seleccionados: 142</span><svg><use href="#float"/></svg><svg><use href="#close"/></svg></div>
    <div class="tb mb"><a class="on"><svg><use href="#pencil"/></svg></a><a><svg><use href="#edmulti"/></svg></a><a><svg><use href="#edsave"/></svg></a><a class="off"><svg><use href="#refresh"/></svg></a><i class="s"></i><a><svg><use href="#tabnew"/></svg></a><a class="hov"><svg><use href="#trash"/></svg></a><a><svg><use href="#cut"/></svg></a><a class="dim"><svg><use href="#copy"/></svg></a><a class="dim"><svg><use href="#paste"/></svg></a><i class="s"></i><a><svg><use href="#eform"/></svg></a><a><svg><use href="#bars"/></svg></a><a><svg><use href="#invert"/></svg></a><a><svg><use href="#desel"/></svg></a><a><svg><use href="#funnel"/></svg></a><a><svg><use href="#totop"/></svg></a><a><svg><use href="#pan"/></svg></a><a><svg><use href="#zsel"/></svg></a><i class="s"></i><a><svg><use href="#colnew"/></svg></a><a><svg><use href="#coldel"/></svg></a><a><svg><use href="#abacus"/></svg></a><i class="s"></i><a><svg><use href="#cond"/></svg></a><i class="s"></i><a class="on"><svg><use href="#dock"/></svg></a><a><svg><use href="#magact"/></svg></a></div>
    <div class="calc"><span class="combo"><em>123</em>id<i class="dn"></i></span><span class="eq">=</span><span class="ebtn"><svg><use href="#eps"/></svg></span><span class="expr"><i class="dn"></i></span><span class="btn b1">Actualizar todo</span><span class="btn b2">Actualizar lo seleccionado</span></div>
    <div class="tablewrap">
      <div class="grid">
        <div class="hr"><span></span><span>id</span><span>left</span><span>top</span><span>right</span><span>bottom</span><span>Mediamean<i class="dn"></i></span></div>
        <div class="r"><b>1</b><span>315</span><span>1031921.4567</span><span>8292743.9879</span><span>1046921.4567</span><span>8277743.9879</span><em>NULL</em></div>
        <div class="r"><b>2</b><span>317</span><span>1031921.4567</span><span>8262743.9879</span><span>1046921.4567</span><span>8247743.9879</span><em>NULL</em></div>
        <div class="r"><b>3</b><span>316</span><span>1031921.4567</span><span>8277743.9879</span><span>1046921.4567</span><span>8262743.9879</span><em>NULL</em></div>
        <div class="r"><b>4</b><span>319</span><span>1031921.4567</span><span>8232743.9879</span><span>1046921.4567</span><span>8217743.9879</span><em>NULL</em></div>
        <div class="r"><b>5</b><span>318</span><span>1031921.4567</span><span>8247743.9879</span><span>1046921.4567</span><span>8232743.9879</span><em>NULL</em></div>
        <div class="r"><b>6</b><span>305</span><span>1031921.4567</span><span>8442743.9879</span><span>1046921.4567</span><span>8427743.9879</span><em>NULL</em></div>
        <div class="r"><b>7</b><span>304</span><span>1016921.4567</span><span>8172743.9879</span><span>1031921.4567</span><span>8157743.9879</span><em>NULL</em></div>
        <div class="r"><b>8</b><span>306</span><span>1031921.4567</span><span>8427743.9879</span><span>1046921.4567</span><span>8412743.9879</span><em>NULL</em></div>
      </div>
      <div class="sb"><i class="up"></i><span class="thumb"></span><span class="trk"></span><i class="dw"></i></div>
    </div>
    <div class="foot"><span class="fbtn"><svg><use href="#funnel"/></svg>Mostrar todos los objetos espaciales<i class="ms"></i></span><span class="fv"><svg><use href="#formv"/></svg></span><span class="fv on"><svg><use href="#table"/></svg></span></div>
  </section>

  <section class="right">
    <div class="dt"><span>Caja de herramientas de Procesos</span><svg><use href="#float"/></svg><svg><use href="#close"/></svg></div>
    <div class="tb"><a class="mini"><svg><use href="#gears"/></svg></a><a class="mini"><svg><use href="#py"/></svg></a><a><svg><use href="#clock"/></svg></a><a><svg><use href="#doc"/></svg></a><i class="s"></i><a><svg><use href="#edit"/></svg></a><i class="s"></i><a><svg><use href="#wrench"/></svg></a></div>
    <div class="search"><svg><use href="#mag"/></svg><span>Zonal</span><svg class="clr" viewBox="0 0 14 10"><path d="M4 0h10v10H4L0 5z" fill="#777"/><path d="M5.500 2l5 6M10.500 2l-5 6" stroke="#fff"/></svg></div>
    <div class="tree algs">
      <div class="al sel"><i class="dn"></i><svg><use href="#clockb"/></svg>Usado recientemente</div>
      <div class="al l2"><svg><use href="#zonal"/></svg>Estadísticas de zona</div>
      <div class="al"><i class="dn"></i><svg><use href="#qgis"/></svg>Análisis ráster</div>
      <div class="al l2"><svg><use href="#zonal"/></svg>Estadísticas de zona</div>
      <div class="al l2"><svg><use href="#gear"/></svg>Histograma zonal</div>
      <div class="al l2"><svg><use href="#gear"/></svg>Raster layer zonal statistics</div>
      <div class="al"><i class="dn"></i><svg><use href="#grass"/></svg>GRASS</div>
      <div class="al ra"><i class="dn"></i>Ráster (r.*)</div>
      <div class="al l3"><svg><use href="#grass"/></svg>r.stats.zonal</div>
    </div>
    <div class="tabs"><span class="t1">Caja de herramientas de Procesos</span><span class="t2">Estilo de capas</span></div>
  </section>
</main>

<footer class="status">
  <span class="loc"><svg><use href="#mag"/></svg>Escriba para localizar (Ctrl+K)</span>
  <span class="msg">142 objetos espaciales se</span>
  <span class="lb1">Coordenada</span><span class="in co">624175,8157927</span>
  <svg class="bug" viewBox="0 0 18 18"><ellipse cx="9" cy="10" rx="5" ry="6.500" fill="#fff" stroke="#222" stroke-width="1.300" transform="rotate(-30 9 10)"/><path d="M2 3l6 5M1 7l5 3M6 1l3 6M12 5l5-4M13 8l4-1M5 14l7-5M8 16l6-4M8 8l4 7" stroke="#222" stroke-width="1.400"/></svg>
  <span class="lb2">Escala</span><span class="in sc">1:5045058<i class="dn"></i></span>
  <svg class="lock" viewBox="0 0 12 16"><path d="M2.500 7V5q0-3.500 3.500-3.500T9.500 5v2" stroke="#777" stroke-width="1.700" fill="none"/><rect y="7" width="12" height="8" rx="1" fill="#606060"/></svg>
  <span class="lb3">Amplificador</span><span class="in am">100%<i class="spin"></i></span>
  <span class="lb4">Rotación</span><span class="in ro">0.0 °<i class="spin"></i></span>
  <i class="ck"></i><span class="lb5">Representar</span>
  <svg class="globe" viewBox="0 0 14 14"><path d="M7 0l5 3 2 4-2 4-5 3-5-3-2-4 2-4z" fill="#bbb" stroke="#777"/><path d="M7 0v14M0 7h14M2 3.500h10M2 10.500h10M4 1.500q-2 5 0 11M10 1.500q2 5 0 11" stroke="#555" fill="none" stroke-width=".8"/></svg>
  <span class="lb6">EPSG:32718</span>
  <svg class="chat" viewBox="0 0 16 16"><path d="M8 1c5 0 8 2.500 8 6 0 2-1 4-3 5l1 3-4-2c-6 1-10-2-10-6s3-6 8-6z" fill="#606060"/><path d="M3.500 7h2M7 7h2M10.500 7h2" stroke="#fff" stroke-width="2"/></svg>
  <svg class="plug" viewBox="0 0 20 22"><path d="M1 8h4q-1-4 2-4t2 4h5v4q4-1 4 2t-4 2v5H9q1-3-2-3t-2 3H1v-4q3 0 3-2.500T1 12z" fill="#999" stroke="#555"/><path d="M15 0l1.500 3 3.500.5-2.500 2.500.5 3.500-3-1.500L12 9.500l.5-3.500L10 3.500l3.500-.5z" fill="#fff" stroke="#888"/></svg>
</footer>
<script src="map.js"></script>
</body>
</html>
```
FILE: styles.css
```css
* { box-sizing: border-box; }
body { margin: 0; width: 1360px; height: 768px; overflow: hidden; display: flex; flex-direction: column; background: #efefef; color: #000; font: 12px "DejaVu Sans", sans-serif; white-space: nowrap; }
i, em { font-style: normal; }
svg { display: block; flex: none; }
.defs { position: absolute; width: 0; height: 0; }
.symbols { display: none; }
.dn { width: 0; height: 0; border: 4px solid transparent; border-top: 5px solid #555; border-bottom: 0; }

.panel { height: 25px; flex: none; display: flex; align-items: center; background: #2b2e39; border-bottom: 1px solid #16181d; color: #c0c4ce; font: 12px "Noto Sans", sans-serif; }
.menu-btn { width: 32px; padding-left: 3px; }
.task { width: 148px; height: 24px; display: flex; align-items: center; padding-left: 3px; gap: 9px; flex: none; }
.task.w { width: 149px; }
.task.w b { letter-spacing: -.05px; }
.task b { font-weight: 400; letter-spacing: -.08px; }
.task.on { background: #5294e2; color: #fff; }
.task .t { width: 16px; height: 16px; }
.tray { display: flex; align-items: center; margin-left: 1px; }
.tray svg { width: 20px; height: 20px; margin: 0 2px; }
.tray .sm { width: 12px; height: 12px; margin: 0 6px; color: #ddd; }
.tray .gap { width: 12px; }
.clk { margin-left: 9px; }

.titlebar { height: 24px; flex: none; display: flex; align-items: center; background: linear-gradient(#fdfdfd, #f4f5f6); padding: 1px 0 0 5px; }
.titlebar strong { flex: 1; text-align: center; color: #6a6a6a; font: bold 12px "Noto Sans", sans-serif; padding-left: 3px; }
.titlebar .dn { border-width: 4px; border-top-width: 5px; }

.menubar { height: 20px; flex: none; display: flex; align-items: center; gap: 14.750px; padding-left: 10px; border-bottom: 1px solid #cfcfcf; }
.menubar u { text-underline-offset: 2px; }

.toolbar { height: 39px; flex: none; display: flex; align-items: center; background: linear-gradient(#f5f5f5, #ececec); border-bottom: 1px solid #b9b9b9; }
.toolbar a { width: 33px; height: 32px; display: flex; align-items: center; justify-content: center; flex: none; }
.toolbar a svg { width: 22px; height: 22px; }
.toolbar a svg.big { width: 24px; height: 24px; }
.toolbar a.on, .tb a.on { background: #dadada; border: 1px solid #adadad; border-radius: 3px; }
.off { opacity: .38; filter: grayscale(1); }
.dim { opacity: .75; filter: grayscale(.7); }
.mini { position: relative; }
.mini::after { content: ""; position: absolute; right: 1px; bottom: 2px; border: 3px solid transparent; border-top: 3px solid #444; border-bottom: 0; }
.hd { width: 16px; height: 18px; background: radial-gradient(circle, #aaa 35%, transparent 40%) 6px 0/4px 3px repeat-y, radial-gradient(circle, #aaa 35%, transparent 40%) 9px 0/4px 3px repeat-y; flex: none; }
.hd.first { width: 12.500px; background-position: 4px 0, 7px 0; }
.ar { width: 12px; flex: none; display: flex; justify-content: center; }
.ar::after { content: ""; border: 4px solid transparent; border-top: 5px solid #555; border-bottom: 0; }
.sp { width: 7px; height: 18px; flex: none; background: linear-gradient(#ccc, #ccc) 4px 0/1px 100% no-repeat; }
.tagy { fill: #f5d92c; stroke: #c7a500; color: #4a3a00; }
.tagr { fill: #fff; stroke: #ff1a1a; color: #ff1a1a; }
.tagg { fill: #ddd; stroke: #888; color: #222; }

main { height: 592px; flex: none; display: flex; }
.left { width: 270px; display: flex; flex-direction: column; }
.mid { width: 732px; margin-left: 6px; display: flex; flex-direction: column; }
.right { width: 346px; margin-left: 6px; display: flex; flex-direction: column; }
.dt { height: 19px; flex: none; display: flex; align-items: center; gap: 2px; padding: 0 2px 0 4px; }
.dt span { flex: 1; }
.dt svg { width: 12px; height: 12px; }
.tb { height: 30px; flex: none; display: flex; align-items: center; padding-left: 3.500px; }
.tb a { width: 25px; height: 24px; display: flex; align-items: center; justify-content: center; }
.tb a svg { width: 16px; height: 16px; }
.tb .s { width: 7px; height: 12px; background: linear-gradient(#ccc, #ccc) 3px 0/1px 100% no-repeat; }
.tb a.hov { background: #fdfdfd; border: 1px solid #aaa; border-radius: 3px; }
.left .ar { width: 11px; }
.tree { background: #fff; border: 1px solid #b4b4b4; }
.layers { flex: 1; margin-top: 1px; }
.ly { height: 18px; display: flex; align-items: center; font-size: 12px; letter-spacing: .05px; }
.ly.sel { background: #308cc6; color: #fff; }
.ly.sel strong { border-bottom: 1px solid #fff; line-height: 14px; padding-top: 1px; }
.tw { width: 23px; }
.rt::after { content: ""; display: block; width: 0; margin-left: 8px; border: 4px solid transparent; border-left: 5px solid #555; border-right: 0; }
.ck { width: 14px; height: 14px; background: #fff; border: 1px solid #b4b4b4; flex: none; display: flex; justify-content: center; }
.ck::after { content: ""; width: 5px; height: 9px; border: solid #000; border-width: 0 2px 2px 0; transform: skewX(-8deg) rotate(35deg); }
.li { width: 16px; height: 16px; margin: 0 5px 0 7px; }
.li svg { width: 14px; height: 14px; margin: 1px; }
.sel .li { border: 1px solid #245f88; }
.sel .li svg { margin: 0; }
.mem { width: 17px; height: 16px; background: #ececec; margin-left: auto; }
.mem svg { width: 16px; height: 15px; }
.ind { width: 3px; height: 17px; border: 1px solid #fff; margin: 0 1px; }
.ind.g { margin-left: auto; background: #ddd; border: 0; }

.map { height: 227px; flex: none; margin-top: 1px; border: 1px solid #b4b4b4; background: #fff; }
.map canvas { display: block; }
.grip { height: 4px; width: 18px; margin: 1px auto 0; background: radial-gradient(circle, #aaa 35%, transparent 40%) 0 1px/3px 3px repeat-x; }
.mt { height: 20px; padding-left: 8px; margin-top: 1px; }
.mb { height: 29px; padding-bottom: 2px; }
.calc { height: 28px; display: flex; align-items: center; padding: 0 1px 0 3px; margin-bottom: 1px; }
.combo, .btn, .ebtn, .expr { height: 24px; border: 1px solid #adadad; border-radius: 3px; background: linear-gradient(#fff, #f1f1f1); display: flex; align-items: center; }
.combo { width: 117px; padding: 0 6px 0 5px; }
.combo em { font-size: 9px; font-weight: bold; color: #666; margin-right: 3px; letter-spacing: -.5px; }
.combo .dn { margin-left: auto; }
.eq { width: 17px; text-align: center; padding-top: 2px; }
.ebtn { width: 24px; padding-left: 3px; }
.ebtn svg { width: 16px; height: 16px; }
.expr { width: 280px; margin-left: 6px; background: #fff; }
.expr .dn { margin-left: auto; margin-right: 6px; }
.expr::before { content: ""; width: 1px; height: 22px; background: #b4b4b4; margin-left: 258px; }
.btn { justify-content: center; margin-left: 4px; }
.b1 { width: 107px; }
.b2 { width: 172px; margin-left: 3px; }
.tablewrap { height: 254px; flex: none; border: 1px solid #b4b4b4; background: #fff; display: flex; overflow: hidden; }
.grid { flex: 1; }
.hr { height: 19px; display: flex; background: #efefef; border-bottom: 1px solid #b4b4b4; }
.hr span { width: 100px; border-right: 1px solid #c0c0c0; text-align: center; line-height: 20px; background: linear-gradient(#fbfbfb, #ebebeb); }
.hr span:first-child { width: 30px; border: 0; }
.hr span:last-child { display: flex; align-items: center; justify-content: flex-start; gap: 9px; border: 0; padding-left: 9px; letter-spacing: -.05px; }
.r { height: 30px; display: flex; color: #fff; line-height: 31px; }
.r b { width: 30px; color: #000; font-weight: 400; padding: 1px 0 0 2px; background: linear-gradient(90deg, #f7f7f7, #eee); border: solid #c0c0c0; border-width: 0 1px 1px 0; }
.r span, .r em { width: 100px; background: #308cc6; border: solid #d0d0d0; border-width: 0 1px 1px 0; text-align: right; padding-right: 3px; }
.r em { font-style: italic; padding-right: 2px; }
.sb { width: 14px; border-left: 1px solid #b4b4b4; display: flex; flex-direction: column; background: #f5f5f5; }
.sb i { height: 13px; display: flex; align-items: center; justify-content: center; }
.sb i::after { content: ""; border: 4px solid transparent; border-top: 5px solid #555; border-bottom: 0; }
.sb .up::after { transform: rotate(180deg); }
.thumb { height: 28px; background: #fff; border: solid #b4b4b4; border-width: 1px 0; }
.trk { flex: 1; background: #dedede; border-bottom: 1px solid #b4b4b4; }
.foot { height: 25px; display: flex; align-items: flex-start; padding: 0 3px 0 3px; }
.fbtn { position: relative; width: 254px; height: 23px; border: 1px solid #adadad; border-radius: 3px; background: linear-gradient(#fff, #f1f1f1); display: flex; align-items: center; padding-left: 2px; gap: 2px; margin-right: auto; }
.fbtn svg { width: 16px; height: 16px; }
.ms { position: absolute; right: 2px; bottom: 2px; border: 3px solid transparent; border-top: 3px solid #555; border-bottom: 0; }
.fv { width: 24px; height: 23px; display: flex; align-items: center; justify-content: center; }
.fv svg { width: 16px; height: 16px; }
.fv.on { background: #dadada; border: 1px solid #adadad; border-radius: 3px; }

.search { height: 22px; margin-top: 2px; border: 1px solid #adadad; border-radius: 3px; background: #fff; display: flex; align-items: center; padding: 0 8px; }
.search svg { width: 12px; height: 12px; color: #888; }
.search span { flex: 1; margin-left: 8px; }
.search .clr { width: 13px; height: 10px; }
.algs { height: 492px; padding-top: 1px; }
.al { height: 18px; display: flex; align-items: center; padding-left: 6px; }
.al svg { width: 15px; height: 15px; margin: 0 6px 0 9px; }
.al .dn + svg { margin-left: 10px; }
.al.sel { background: #308cc6; color: #e8f3fa; }
.al.sel .dn { border-top-color: #173f5a; }
.al.l2 { padding-left: 35px; }
.al.l3 { padding-left: 55px; }
.al.ra { height: 15px; padding-left: 26px; }
.al.ra .dn { margin-right: 9px; }
.tabs { height: 26px; display: flex; align-items: flex-start; }
.t1 { width: 230px; height: 25px; border: 1px solid #b4b4b4; border-top: 0; border-radius: 0 0 3px 3px; background: #f6f6f6; text-align: center; line-height: 27px; }
.t2 { width: 115px; height: 23px; border: 1px solid #b4b4b4; border-left: 0; background: #dcdcdc; text-align: center; line-height: 24px; }

.status { height: 29px; flex: none; display: flex; align-items: center; font-size: 9px; padding-left: 4px; }
.status > span { flex: none; }
.loc { width: 325px; height: 23px; border: 1px solid #adadad; border-radius: 3px; background: #fff; color: #888; display: flex; align-items: center; padding-left: 8px; gap: 8px; font-size: 12px; }
.loc svg { width: 12px; height: 12px; }
.msg { width: 113px; margin-left: 8px; overflow: hidden; }
.lb1 { margin-left: 9px; width: 58px; }
.in { height: 22px; border: 1px solid #adadad; border-radius: 3px; background: #fff; display: flex; align-items: center; padding-left: 4px; }
.co { width: 99px; padding-left: 9px; }
.bug { width: 17px; height: 17px; margin-left: 3px; }
.lb2 { width: 32px; margin-left: 13px; }
.sc { width: 96px; background: linear-gradient(#b4b4b4, #b4b4b4) 75px 0/1px 100% no-repeat #fff; }
.sc .dn { margin-left: auto; margin-right: 6px; }
.lock { width: 12px; height: 16px; margin-left: 12px; }
.lb3 { width: 60px; margin-left: 9px; }
.am { width: 95px; }
.spin { margin-left: auto; width: 14px; height: 20px; border-left: 1px solid #b4b4b4; display: flex; flex-direction: column; align-items: center; justify-content: center; gap: 4px; }
.spin::before, .spin::after { content: ""; border: 3.500px solid transparent; border-bottom: 4px solid #555; border-top: 0; }
.spin::after { border-top: 4px solid #555; border-bottom: 0; }
.lb4 { width: 49px; margin-left: 9px; }
.ro { width: 91px; margin-right: 6px; }
.lb5 { width: 72px; margin-left: 5px; }
.globe { width: 14px; height: 14px; }
.lb6 { width: 79px; margin-left: 3px; }
.chat { width: 16px; height: 16px; }
.plug { width: 20px; height: 21px; margin-left: 14px; }
```
FILE: map.js
```js
// Draws the elevation raster, the vector grid and the selected cells.
(function () {
  var c = document.getElementById('map').getContext('2d');
  // Canvas origin on the page is (277,149); shapes are stored in thirds of a pixel from (530,148).
  function X(v) { return v / 3 + 253; }
  function Y(v) { return v / 3 - 1; }
  var outline = [290,50,305,38,340,42,375,45,400,38,425,40,440,52,470,65,515,68,535,95,560,110,600,112,617,128,610,150,605,165,625,175,628,205,620,225,600,240,590,280,585,310,562,315,565,370,560,400,540,410,510,425,480,440,450,455,430,465,400,468,375,485,385,530,372,560,370,600,345,605,350,640,310,638,280,625,275,605,240,580,205,560,190,600,180,613,150,612,140,590,125,565,100,560,80,545,60,535,40,550,35,520,60,498,85,480,95,470,95,455,90,435,72,420,100,405,105,385,102,350,115,325,130,335,137,365,175,350,205,370,225,395,250,375,275,350,300,328,335,318,350,290,345,240,340,205,320,180,295,190,260,205,245,210,235,190,245,170,265,155,260,120,262,70];
  var pts = [305,55,.55,280,80,.3,290,110,.42,270,140,.48,310,85,.55,340,100,.88,370,60,.75,400,50,.98,440,90,.7,350,150,.75,380,150,.8,310,130,.62,430,160,.52,480,180,.47,450,200,.47,560,180,.78,600,190,.72,580,220,.55,560,140,.6,480,100,.65,520,130,.5,420,210,.47,500,240,.47,450,250,.5,540,300,.45,540,260,.46,590,210,.55,370,220,.55,390,240,.47,380,270,.75,410,300,.85,350,330,.8,400,350,.9,330,370,.75,300,340,.8,450,340,.65,440,310,.6,480,270,.5,480,310,.5,510,380,.46,500,330,.46,480,350,.5,550,390,.46,540,350,.46,400,420,.75,370,400,.7,430,440,.5,460,410,.5,300,400,.75,250,420,.65,220,380,.75,150,385,.97,120,340,.8,190,390,.9,160,405,.7,100,412,.05,80,418,.02,110,425,.55,135,415,.1,165,425,.25,200,430,.35,130,440,.85,130,460,.97,150,480,.7,180,460,.7,240,390,.4,100,490,.4,80,500,.35,60,520,.1,40,535,0,100,525,.02,130,550,0,160,590,0,180,560,.15,150,520,.25,190,520,.4,215,500,.88,230,450,.65,260,480,.7,300,470,.72,340,490,.72,320,430,.7,280,530,.6,250,510,.6,330,540,.75,360,520,.65,215,545,.7,250,590,.4,300,580,.8,340,580,.7,290,610,.75,330,610,.6,260,560,.55];
  var ramp = [[68,1,84],[71,39,119],[62,73,137],[48,104,142],[38,130,142],[31,158,137],[53,183,121],[109,205,89],[180,222,44],[253,231,37]];
  function rnd(x, y) { var s = Math.sin(x * 127.1 + y * 311.7) * 43758.5453; return s - Math.floor(s); }
  function noise(x, y) {
    var i = Math.floor(x), j = Math.floor(y), u = x - i, v = y - j;
    return (rnd(i, j) * (1 - u) + rnd(i + 1, j) * u) * (1 - v) + (rnd(i, j + 1) * (1 - u) + rnd(i + 1, j + 1) * u) * v - .5;
  }
  // raster
  c.save(); c.beginPath();
  for (var k = 0; k < outline.length; k += 2) {
    var ax = outline[k], ay = outline[k + 1], bx = outline[(k + 2) % outline.length], by = outline[(k + 3) % outline.length];
    if (k) c.lineTo(X(ax), Y(ay)); else c.moveTo(X(ax), Y(ay));
    for (var q0 = .25; q0 < 1; q0 += .25) c.lineTo(X(ax + (bx - ax) * q0 + rnd(k, q0 * 7) * 8 - 4), Y(ay + (by - ay) * q0 + rnd(q0 * 5, k) * 8 - 4));
  }
  c.closePath(); c.clip();
  for (var y = 8; y < 216; y++) for (var x = 262; x < 466; x++) {
    var px = (x - 253) * 3, py = (y + 1) * 3, sw = 0, sv = 0;
    for (k = 0; k < pts.length; k += 3) {
      var d = (px - pts[k]) * (px - pts[k]) + (py - pts[k + 1]) * (py - pts[k + 1]) + 60, w = 1 / (d * d);
      sw += w; sv += w * pts[k + 2];
    }
    var t = sv / sw, amp = t < .12 ? .06 : t < .52 ? .14 : .26;
    t += noise(x / 4, y / 4) * amp + noise(x / 1.7, y / 1.7) * amp * .6;
    if (sv / sw > .44 && t < .45) t = .46;
    t = Math.max(0, Math.min(.999, t)) * 9;
    var a = ramp[Math.floor(t)], b = ramp[Math.min(9, Math.floor(t) + 1)], f = t % 1;
    c.fillStyle = 'rgb(' + [0, 1, 2].map(function (n) { return Math.round(a[n] + (b[n] - a[n]) * f); }) + ')';
    c.fillRect(x, y, 1, 1);
  }
  c.restore();
  // selected column ranges for each grid row
  var sel = [[0,6,15,17],[0,5,16,17],[0,5],[0,5],[0,5],[0,5,7,7],[0,8],[0,7,17,17],[0,1,3,7,17,17],[0,1,17,17],[0,0,16,17],[0,0,16,17],[0,0,14,17],[11,17],[11,17],[11,17],[0,1,5,5,11,17],[0,2,5,6,10,17],[0,7,10,17]];
  var x0 = 264.6, y0 = 10.3, s = 11.23, marks = {};
  c.fillStyle = '#ff0';
  sel.forEach(function (r, j) {
    for (var q = 0; q < r.length; q += 2) for (var i = r[q]; i <= r[q + 1]; i++) {
      c.fillRect(x0 + i * s, y0 + j * s, s, s);
      marks[i + ',' + j] = 2; marks[i + ',' + (j + 1)] = 2;
      marks[(i + 1) + ',' + j] = marks[(i + 1) + ',' + j] || 1;
      marks[(i + 1) + ',' + (j + 1)] = marks[(i + 1) + ',' + (j + 1)] || 1;
    }
  });
  c.strokeStyle = 'rgba(25,25,25,.85)'; c.lineWidth = 1.3;
  for (k = 0; k < 20; k++) {
    c.beginPath();
    if (k < 19) { c.moveTo(x0 + k * s, y0); c.lineTo(x0 + k * s, y0 + 19 * s); }
    c.moveTo(x0, y0 + k * s); c.lineTo(x0 + 18 * s, y0 + k * s); c.stroke();
  }
  c.lineWidth = 1.3;
  Object.keys(marks).forEach(function (m) {
    var p = m.split(','), mx = x0 + p[0] * s - .5, my = y0 + p[1] * s - .3, h = 3.8;
    c.strokeStyle = marks[m] === 2 ? '#f00' : 'rgba(255,0,0,.55)';
    c.beginPath(); c.moveTo(mx - h, my - h); c.lineTo(mx + h, my + h); c.moveTo(mx + h, my - h); c.lineTo(mx - h, my + h); c.stroke();
  });
})();
```
